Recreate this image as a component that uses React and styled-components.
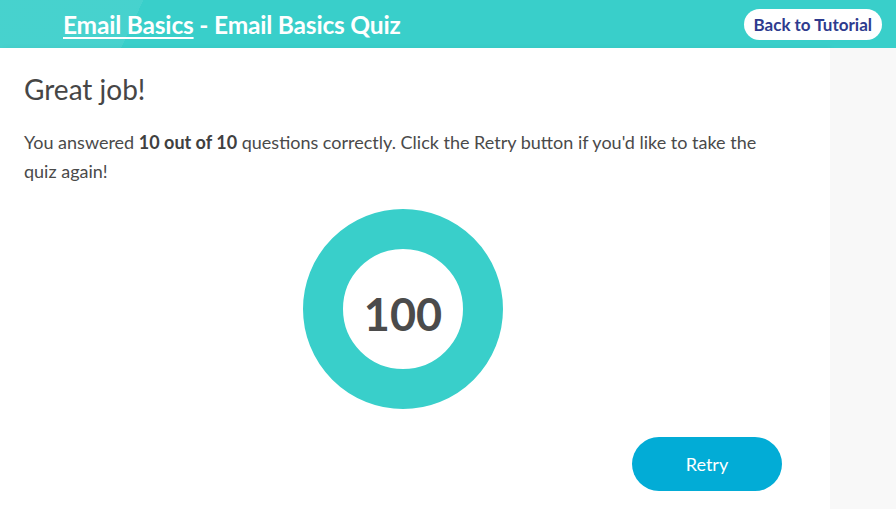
import styled, { createGlobalStyle } from "styled-components";

const GlobalStyle = createGlobalStyle`
  html, body {
    margin: 0;
    padding: 0;
    background: #f8f8f8;
    font-family: "Source Sans Pro", Lato, "Noto Sans", sans-serif;
  }
`;

const Page = styled.div`
  width: 896px;
  height: 509px;
  display: flex;
  flex-direction: column;
  overflow: hidden;
`;

const Header = styled.header`
  height: 48px;
  flex-shrink: 0;
  display: flex;
  align-items: center;
  justify-content: space-between;
  padding: 0 14px 0 63px;
  background:
    linear-gradient(115deg, rgba(255, 255, 255, 0.07) 0 130px, transparent 130px),
    #39cfca;
`;

const HeaderTitle = styled.h1`
  margin: 0;
  font-size: 24.5px;
  font-weight: 700;
  color: #fff;
  letter-spacing: -0.2px;
`;

const TitleLink = styled.a`
  color: #fff;
  text-decoration: underline;
  text-underline-offset: 3px;
  text-decoration-thickness: 2px;
`;

const BackButton = styled.button`
  height: 31px;
  padding: 0 10px;
  border: none;
  border-radius: 16px;
  background: #fff;
  color: #2e3b8e;
  font-family: inherit;
  font-size: 17px;
  font-weight: 700;
`;

const Body = styled.div`
  flex: 1;
  display: flex;
`;

const Main = styled.main`
  width: 830px;
  background: #fff;
  box-shadow: 2px 0 6px rgba(0, 0, 0, 0.04);
  padding: 24px 48px 0 24px;
  box-sizing: border-box;
  display: flex;
  flex-direction: column;
`;

const Heading = styled.h2`
  margin: 0;
  font-size: 28px;
  line-height: 34px;
  font-weight: 400;
  color: #464646;
`;

const Text = styled.p`
  margin: 22px 0 0;
  font-size: 18px;
  line-height: 29px;
  color: #4a4a4a;

  strong {
    color: #404040;
  }
`;

const ScoreWrap = styled.div`
  display: flex;
  justify-content: center;
  margin-top: 23px;
`;

const Ring = styled.div`
  width: 200px;
  height: 200px;
  box-sizing: border-box;
  border: 40px solid #39cfca;
  border-radius: 50%;
  display: flex;
  align-items: center;
  justify-content: center;
  padding-top: 10px;
`;

const Score = styled.span`
  font-size: 45px;
  font-weight: 700;
  color: #4b4b4b;
`;

const Actions = styled.div`
  display: flex;
  justify-content: flex-end;
  margin-top: 28px;
`;

const RetryButton = styled.button`
  width: 150px;
  height: 54px;
  border: none;
  border-radius: 27px;
  background: #02acd6;
  color: #fff;
  font-family: inherit;
  font-size: 18px;
`;

const Side = styled.aside`
  flex: 1;
  background: #f8f8f8;
`;

const App = () => {
  return (
    <Page>
      <GlobalStyle />
      <Header>
        <HeaderTitle>
          <TitleLink>Email Basics</TitleLink> - Email Basics Quiz
        </HeaderTitle>
        <BackButton>Back to Tutorial</BackButton>
      </Header>
      <Body>
        <Main>
          <Heading>Great job!</Heading>
          <Text>
            You answered <strong>10 out of 10</strong> questions correctly. Click
            the Retry button if you'd like to take the quiz again!
          </Text>
          <ScoreWrap>
            <Ring>
              <Score>100</Score>
            </Ring>
          </ScoreWrap>
          <Actions>
            <RetryButton>Retry</RetryButton>
          </Actions>
        </Main>
        <Side />
      </Body>
    </Page>
  );
};

export default App;
